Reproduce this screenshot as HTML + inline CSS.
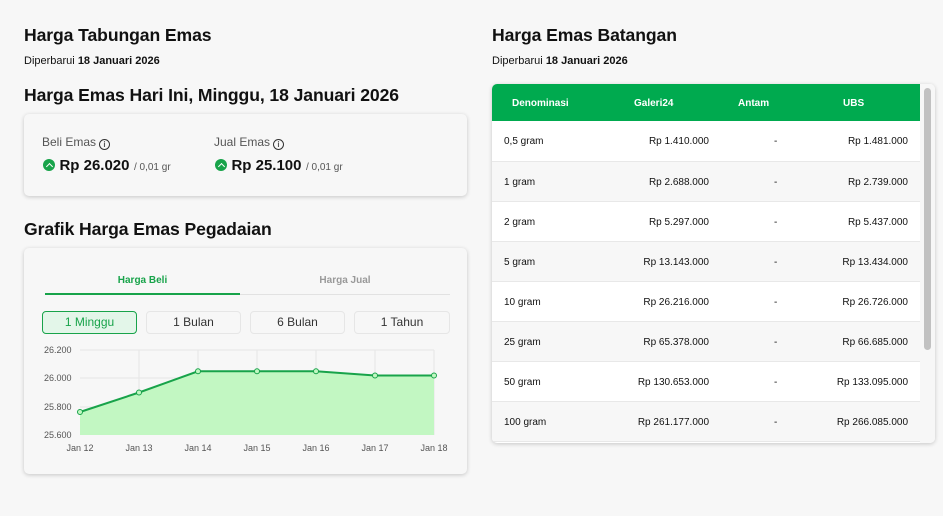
<!DOCTYPE html>
<html><head><meta charset="utf-8"><style>
*{box-sizing:border-box;margin:0;padding:0}
body{width:943px;height:516px;background:#f7f7f7;font-family:"Liberation Sans",sans-serif;color:#111;position:relative;overflow:hidden}
.abs{position:absolute}
h2{font-size:17.6px;font-weight:bold;position:absolute;letter-spacing:-0.1px}
.sub{font-size:11px;position:absolute}
.card{position:absolute;background:#f7f7f7;border-radius:5px;box-shadow:0 1px 4px rgba(0,0,0,.2)}
.lbl{font-size:12px;color:#555}
.info{display:inline-block;width:11px;height:11px;border:1.3px solid #333;border-radius:50%;font-size:8px;line-height:9px;text-align:center;font-weight:bold;vertical-align:-1px;margin-left:3px}
.up{display:inline-block;width:12px;height:12px;border-radius:50%;background:#18a34a;vertical-align:-1px;position:relative}
.up:after{content:"";position:absolute;left:3.5px;top:4.5px;width:4px;height:4px;border-left:1.5px solid #fff;border-top:1.5px solid #fff;transform:rotate(45deg)}
.price{font-size:15px;font-weight:bold}
.unit{font-size:10px;color:#555}
.btn{position:absolute;top:311px;height:23px;border:1px solid #e6e6e6;border-radius:4px;font-size:12px;text-align:center;line-height:21px;color:#333;background:#f7f7f7}
table{border-collapse:collapse;width:428px;font-size:10px;table-layout:fixed}
th{background:#00aa4f;color:#fff;font-size:10px;height:37px;font-weight:bold;text-align:left;padding-top:2px}
td{height:40px;border-bottom:1px solid #e8e8e8;padding-top:2px}
tr:nth-child(even) td{background:#fff}
tr:nth-child(odd) td{background:#f7f7f7}
.r{text-align:right}
.d{padding-left:65px}
.u{text-align:right;padding-right:12px}
</style></head><body>
<h2 style="left:24px;top:25px">Harga Tabungan Emas</h2>
<div class="sub" style="left:24px;top:55px">Diperbarui <b>18 Januari 2026</b></div>
<h2 style="left:24px;top:85px">Harga Emas Hari Ini, Minggu, 18 Januari 2026</h2>
<div class="card" style="left:24px;top:114px;width:443px;height:82px">
 <div class="abs lbl" style="left:18px;top:21px">Beli Emas<span class="info">i</span></div>
 <div class="abs" style="left:19px;top:43px"><span class="up"></span> <span class="price">Rp 26.020</span> <span class="unit">/ 0,01 gr</span></div>
 <div class="abs lbl" style="left:190px;top:21px">Jual Emas<span class="info">i</span></div>
 <div class="abs" style="left:191px;top:43px"><span class="up"></span> <span class="price">Rp 25.100</span> <span class="unit">/ 0,01 gr</span></div>
</div>
<h2 style="left:24px;top:219px">Grafik Harga Emas Pegadaian</h2>
<div class="card" style="left:24px;top:248px;width:443px;height:226px"></div>
<div class="abs" style="left:45px;top:275px;width:195px;text-align:center;font-size:10px;font-weight:bold;color:#18a34a">Harga Beli</div>
<div class="abs" style="left:240px;top:275px;width:210px;text-align:center;font-size:10px;font-weight:bold;color:#999">Harga Jual</div>
<div class="abs" style="left:45px;top:294px;width:405px;height:1px;background:#e2e2e2"></div>
<div class="abs" style="left:45px;top:293px;width:195px;height:2px;background:#18a34a"></div>
<div class="btn" style="left:42px;width:95px;border-color:#18a34a;background:#e3f6e9;color:#18a34a">1 Minggu</div>
<div class="btn" style="left:146px;width:95px">1 Bulan</div>
<div class="btn" style="left:250px;width:95px">6 Bulan</div>
<div class="btn" style="left:354px;width:96px">1 Tahun</div>
<svg class="abs" style="left:0;top:0" width="470" height="480">
 <g stroke="#e6e6e6" stroke-width="1">
  <line x1="80" y1="350" x2="434" y2="350"/><line x1="80" y1="378" x2="434" y2="378"/><line x1="80" y1="407" x2="434" y2="407"/>
  <line x1="139" y1="350" x2="139" y2="435"/><line x1="198" y1="350" x2="198" y2="435"/><line x1="257" y1="350" x2="257" y2="435"/><line x1="316" y1="350" x2="316" y2="435"/><line x1="375" y1="350" x2="375" y2="435"/><line x1="434" y1="350" x2="434" y2="435"/>
 </g>
 <polygon points="80,412 139,392.5 198,371.3 257,371.3 316,371.3 375,375.5 434,375.5 434,435 80,435" fill="#c2f7c2"/>
 <polyline points="80,412 139,392.5 198,371.3 257,371.3 316,371.3 375,375.5 434,375.5" fill="none" stroke="#18a34a" stroke-width="2"/>
 <g fill="#c2f7c2" stroke="#18a34a" stroke-width="1"><circle cx="80" cy="412" r="2.5"/><circle cx="139" cy="392.5" r="2.5"/><circle cx="198" cy="371.3" r="2.5"/><circle cx="257" cy="371.3" r="2.5"/><circle cx="316" cy="371.3" r="2.5"/><circle cx="375" cy="375.5" r="2.5"/><circle cx="434" cy="375.5" r="2.5"/></g>
 <g font-size="9" fill="#555" font-family="Liberation Sans">
  <text x="44" y="353">26.200</text><text x="44" y="381">26.000</text><text x="44" y="410">25.800</text><text x="44" y="438">25.600</text>
  <g text-anchor="middle"><text x="80" y="451">Jan 12</text><text x="139" y="451">Jan 13</text><text x="198" y="451">Jan 14</text><text x="257" y="451">Jan 15</text><text x="316" y="451">Jan 16</text><text x="375" y="451">Jan 17</text><text x="434" y="451">Jan 18</text></g>
 </g>
</svg>
<h2 style="left:492px;top:25px">Harga Emas Batangan</h2>
<div class="sub" style="left:492px;top:55px">Diperbarui <b>18 Januari 2026</b></div>
<div class="card" style="left:492px;top:84px;width:443px;height:359px;overflow:hidden;background:#fff">
 <table>
  <colgroup><col style="width:142px"><col style="width:75px"><col style="width:111px"><col style="width:100px"></colgroup>
  <tr><th style="padding-left:20px">Denominasi</th><th>Galeri24</th><th style="padding-left:29px">Antam</th><th style="padding-left:23px">UBS</th></tr>
  <tr><td style="padding-left:12px">0,5 gram</td><td class="r">Rp 1.410.000</td><td class="d">-</td><td class="u">Rp 1.481.000</td></tr>
  <tr><td style="padding-left:12px">1 gram</td><td class="r">Rp 2.688.000</td><td class="d">-</td><td class="u">Rp 2.739.000</td></tr>
  <tr><td style="padding-left:12px">2 gram</td><td class="r">Rp 5.297.000</td><td class="d">-</td><td class="u">Rp 5.437.000</td></tr>
  <tr><td style="padding-left:12px">5 gram</td><td class="r">Rp 13.143.000</td><td class="d">-</td><td class="u">Rp 13.434.000</td></tr>
  <tr><td style="padding-left:12px">10 gram</td><td class="r">Rp 26.216.000</td><td class="d">-</td><td class="u">Rp 26.726.000</td></tr>
  <tr><td style="padding-left:12px">25 gram</td><td class="r">Rp 65.378.000</td><td class="d">-</td><td class="u">Rp 66.685.000</td></tr>
  <tr><td style="padding-left:12px">50 gram</td><td class="r">Rp 130.653.000</td><td class="d">-</td><td class="u">Rp 133.095.000</td></tr>
  <tr><td style="padding-left:12px">100 gram</td><td class="r">Rp 261.177.000</td><td class="d">-</td><td class="u">Rp 266.085.000</td></tr>
 </table>
 <div class="abs" style="left:428px;top:0;width:15px;height:359px;background:#f7f7f7"></div>
 <div class="abs" style="left:432px;top:4px;width:7px;height:262px;background:#c1c1c1;border-radius:4px"></div>
</div>
</body></html>
